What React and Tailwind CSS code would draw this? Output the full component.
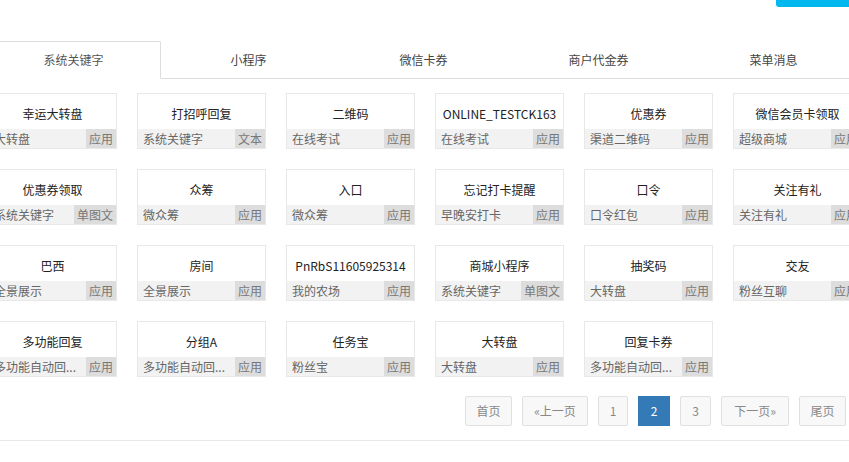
import React from "react";

const tabs = ["系统关键字", "小程序", "微信卡券", "商户代金券", "菜单消息"];

const cards = [
  ["幸运大转盘", "大转盘", "应用"],
  ["打招呼回复", "系统关键字", "文本"],
  ["二维码", "在线考试", "应用"],
  ["ONLINE_TESTCK163", "在线考试", "应用"],
  ["优惠券", "渠道二维码", "应用"],
  ["微信会员卡领取", "超级商城", "应用"],
  ["优惠券领取", "系统关键字", "单图文"],
  ["众筹", "微众筹", "应用"],
  ["入口", "微众筹", "应用"],
  ["忘记打卡提醒", "早晚安打卡", "应用"],
  ["口令", "口令红包", "应用"],
  ["关注有礼", "关注有礼", "应用"],
  ["巴西", "全景展示", "应用"],
  ["房间", "全景展示", "应用"],
  ["PnRbS11605925314", "我的农场", "应用"],
  ["商城小程序", "系统关键字", "单图文"],
  ["抽奖码", "大转盘", "应用"],
  ["交友", "粉丝互聊", "应用"],
  ["多功能回复", "多功能自动回...", "应用"],
  ["分组A", "多功能自动回...", "应用"],
  ["任务宝", "粉丝宝", "应用"],
  ["大转盘", "大转盘", "应用"],
  ["回复卡券", "多功能自动回...", "应用"],
];

const pages = [
  { t: "首页", w: "w-[47px]" },
  { t: "«上一页", w: "w-[66px]" },
  { t: "1", w: "w-[30px]" },
  { t: "2", w: "w-[32px]", active: true },
  { t: "3", w: "w-[31px]" },
  { t: "下一页»", w: "w-[68px]" },
  { t: "尾页", w: "w-[47px]" },
];

export default function App() {
  return (
    <div className="w-[849px] h-[462px] overflow-hidden bg-white font-['Noto_Sans_CJK_SC','Microsoft_YaHei',sans-serif] text-[#333]">
      <div className="flex justify-end h-[7px]">
        <div className="w-[73px] h-[7px] bg-[#00b7ee] rounded-bl-[3px]" />
      </div>

      <div className="mt-[34px] ml-[-14px] flex border-b border-[#dddddd] w-[880px]">
        {tabs.map((t, i) =>
          i === 0 ? (
            <div
              key={t}
              className="w-[175px] h-[38px] -mb-px flex items-center justify-center text-[12px] text-[#555] bg-white border border-[#dddddd] border-b-white rounded-t-[2px]"
            >
              {t}
            </div>
          ) : (
            <div
              key={t}
              className="w-[175px] h-[37px] flex items-center justify-center text-[12px] text-[#444]"
            >
              {t}
            </div>
          )
        )}
      </div>

      <div className="mt-[14px] ml-[-12px] grid grid-cols-[repeat(6,129px)] gap-x-[20px] gap-y-[20px]">
        {cards.map(([title, sub, tag], i) => (
          <div key={i} className="h-[56px] border border-[#e8e8e8] flex flex-col">
            <div className="h-[35px] flex items-center justify-center pt-[5px] text-[12px] text-[#222] whitespace-nowrap">
              {title}
            </div>
            <div className="h-[19px] bg-[#f2f2f2] flex items-center text-[12px] text-[#666]">
              <span className="flex-1 min-w-0 whitespace-nowrap overflow-hidden pl-[5px]">{sub}</span>
              <span className="h-full flex items-center px-[3px] bg-[#dddddd] text-[#777]">{tag}</span>
            </div>
          </div>
        ))}
      </div>

      <div className="mt-[19px] flex justify-end gap-[10px] pr-[3px]">
        {pages.map((p) =>
          p.active ? (
            <div
              key={p.t}
              className={`${p.w} h-[30px] flex items-center justify-center text-[12px] text-white bg-[#337ab7] border border-[#337ab7]`}
            >
              {p.t}
            </div>
          ) : (
            <div
              key={p.t}
              className={`${p.w} h-[30px] flex items-center justify-center text-[12px] text-[#888] bg-[#f8f8f8] border border-[#e0e0e0] rounded-[2px]`}
            >
              {p.t}
            </div>
          )
        )}
      </div>

      <div className="mt-[14px] border-t border-[#e8e8e8]" />
    </div>
  );
}
